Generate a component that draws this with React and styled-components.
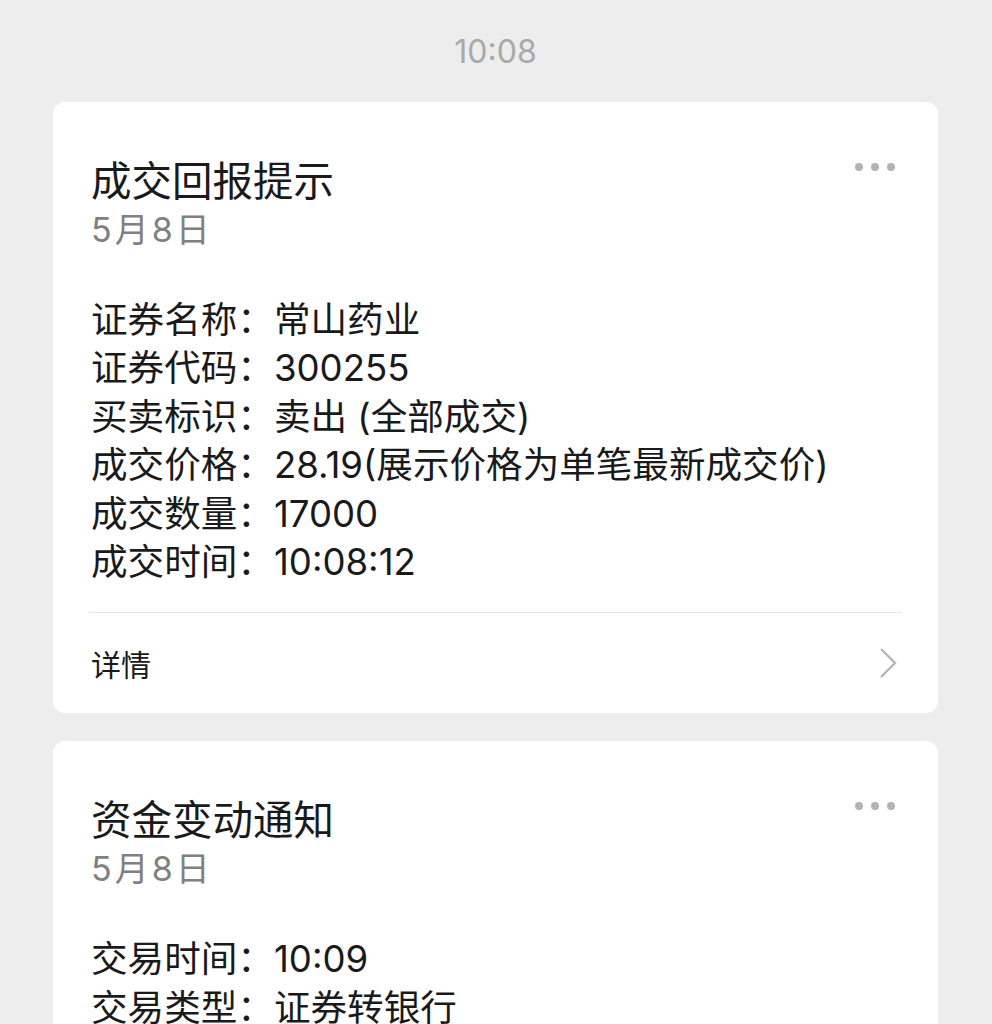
import React from "react";
import styled, { createGlobalStyle } from "styled-components";

const GlobalStyle = createGlobalStyle`
  body {
    margin: 0;
    background: #ededed;
    font-family: Inter, "Noto Sans CJK SC", sans-serif;
    color: #1a1a1a;
  }
`;

const cards = [
  {
    title: "成交回报提示",
    date: "5月8日",
    fields: [
      ["证券名称", "常山药业"],
      ["证券代码", "300255"],
      ["买卖标识", "卖出 (全部成交)"],
      ["成交价格", "28.19(展示价格为单笔最新成交价)"],
      ["成交数量", "17000"],
      ["成交时间", "10:08:12"],
    ],
    footer: true,
  },
  {
    title: "资金变动通知",
    date: "5月8日",
    fields: [
      ["交易时间", "10:09"],
      ["交易类型", "证券转银行"],
    ],
  },
];

const MessageCard = ({ card }) => {
  return (
    <Card>
      <Header>
        <div>
          <Title>{card.title}</Title>
          <DateText>{card.date}</DateText>
        </div>
        <More>
          <Dot />
          <Dot />
          <Dot />
        </More>
      </Header>
      <Fields>
        {card.fields.map(([label, value]) => (
          <Field key={label}>
            {label}：{value}
          </Field>
        ))}
      </Fields>
      {card.footer && (
        <Footer>
          <span>详情</span>
          <svg width="20" height="32" viewBox="0 0 20 32">
            <polyline
              points="3,2 17,16 3,30"
              fill="none"
              stroke="#b5b5b5"
              strokeWidth="2.4"
            />
          </svg>
        </Footer>
      )}
    </Card>
  );
};

const App = () => {
  return (
    <Page>
      <GlobalStyle />
      <TimeStamp>10:08</TimeStamp>
      {cards.map((card) => (
        <MessageCard key={card.title} card={card} />
      ))}
    </Page>
  );
};

const Page = styled.div`
  height: 1024px;
  overflow: hidden;
  padding: 0 54px 0 53px;
`;

const TimeStamp = styled.div`
  height: 102px;
  display: flex;
  align-items: center;
  justify-content: center;
  font-size: 32px;
  color: #a9a9a9;
`;

const Card = styled.div`
  background: #fff;
  border-radius: 12px;
  padding: 56px 36px 0 38px;
  margin-bottom: 28px;
`;

const Header = styled.div`
  display: flex;
  justify-content: space-between;
  align-items: flex-start;
`;

const Title = styled.div`
  font-size: 40.5px;
  line-height: 48px;
`;

const DateText = styled.div`
  font-size: 34px;
  line-height: 48px;
  color: #808080;
  letter-spacing: 3px;
`;

const More = styled.div`
  display: flex;
  gap: 8px;
  margin: 5px 7px 0 0;
`;

const Dot = styled.span`
  width: 8px;
  height: 8px;
  border-radius: 50%;
  background: #b3b3b3;
`;

const Fields = styled.div`
  margin-top: 42px;
  padding-bottom: 26px;
`;

const Field = styled.div`
  font-size: 36.6px;
  line-height: 48.4px;
`;

const Footer = styled.div`
  height: 100px;
  margin-left: -2px;
  border-top: 1px solid #e6e6e6;
  display: flex;
  align-items: center;
  justify-content: space-between;
  padding: 0 4px 0 2px;
  font-size: 30px;
`;

export default App;
